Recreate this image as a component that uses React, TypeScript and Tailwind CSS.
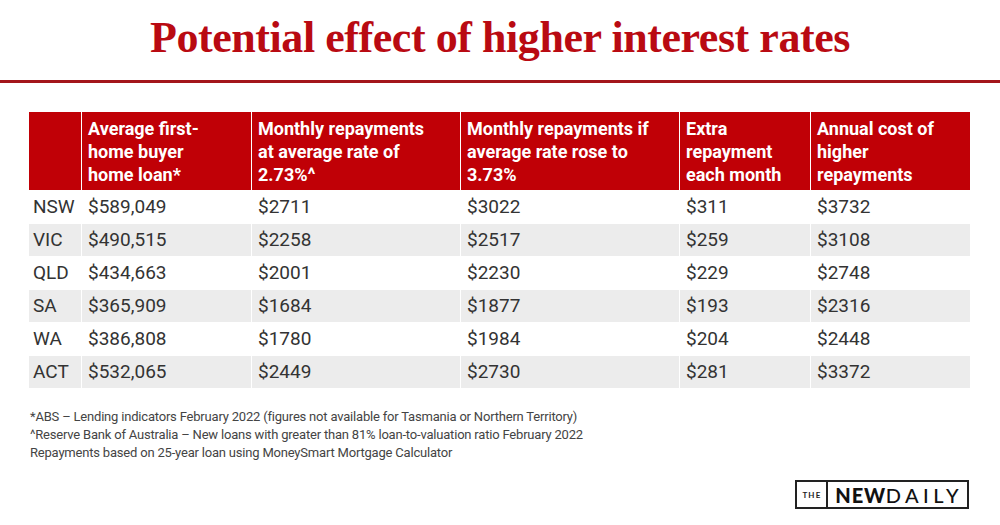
const HEADERS: string[][] = [
  [],
  ["Average first-", "home buyer", "home loan*"],
  ["Monthly repayments", "at average rate of", "2.73%^"],
  ["Monthly repayments if", "average rate rose to", "3.73%"],
  ["Extra", "repayment", "each month"],
  ["Annual cost of", "higher", "repayments"],
];

const ROWS = [
  ["NSW", "$589,049", "$2711", "$3022", "$311", "$3732"],
  ["VIC", "$490,515", "$2258", "$2517", "$259", "$3108"],
  ["QLD", "$434,663", "$2001", "$2230", "$229", "$2748"],
  ["SA", "$365,909", "$1684", "$1877", "$193", "$2316"],
  ["WA", "$386,808", "$1780", "$1984", "$204", "$2448"],
  ["ACT", "$532,065", "$2449", "$2730", "$281", "$3372"],
];

const NOTES = [
  "*ABS – Lending indicators February 2022 (figures not available for Tasmania or Northern Territory)",
  "^Reserve Bank of Australia – New loans with greater than 81% loan-to-valuation ratio February 2022",
  "Repayments based on 25-year loan using MoneySmart Mortgage Calculator",
];

function Logo() {
  return (
    <div className="flex items-stretch h-[29px] border-2 border-[#222] bg-white">
      <div className="flex items-center px-[5px] border-r-2 border-[#222] font-['Lato'] font-bold text-[8px] tracking-[0.14em] text-[#222]">
        THE
      </div>
      <div className="flex items-center pl-[7px] pr-[4px] font-['Lato'] text-[20px] leading-none text-[#111]">
        <span className="font-black tracking-[0.04em]">NEW</span>
        <span className="font-medium tracking-[0.22em]">DAILY</span>
      </div>
    </div>
  );
}

export default function App() {
  return (
    <div className="w-[1000px] h-[525px] bg-white font-['Roboto',sans-serif] overflow-hidden">
      <div className="h-[80px] pt-[16px]">
        <h1 className="text-center font-['Liberation_Serif',serif] font-bold text-[44px] leading-[44px] tracking-[-0.01em] text-[#b90a12]">
          Potential effect of higher interest rates
        </h1>
      </div>
      <div className="h-[3px] bg-[#a3161b]" />

      <div className="mt-[29px] ml-[29px] w-[941px] grid grid-cols-[52px_169px_208px_218px_130px_159px] gap-px bg-white">
        {HEADERS.map((lines, i) => (
          <div
            key={i}
            className="h-[78px] bg-[#c00006] pl-[6px] pt-[5px] text-white font-bold text-[18px] leading-[23px] whitespace-nowrap"
          >
            {lines.map((l) => (
              <div key={l}>{l}</div>
            ))}
          </div>
        ))}
        {ROWS.map((row, r) =>
          row.map((cell, c) => (
            <div
              key={`${r}-${c}`}
              className={`h-[32px] flex items-center text-[19px] text-[#333] ${c === 0 ? "pl-[4px]" : "pl-[6px]"} ${r % 2 === 1 ? "bg-[#ececec]" : "bg-white"}`}
            >
              {cell}
            </div>
          ))
        )}
      </div>

      <div className="mt-[20px] pl-[30px] text-[13px] leading-[18px] tracking-[-0.015em] text-[#444]">
        {NOTES.map((n) => (
          <div key={n}>{n}</div>
        ))}
      </div>

      <div className="mt-[18px] flex justify-end pr-[31px]">
        <Logo />
      </div>
    </div>
  );
}
